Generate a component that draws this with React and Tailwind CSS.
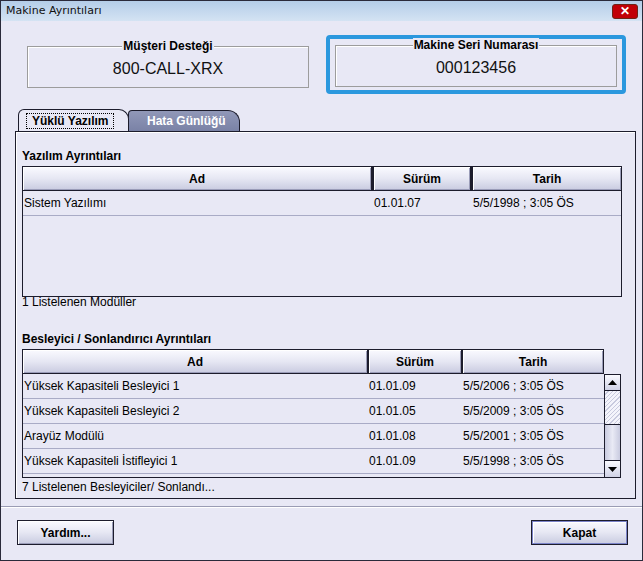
import React from "react";

const font = { fontFamily: '"Liberation Sans", Arial, sans-serif' };

const HeaderCell = ({ children, className = "" }) => (
  <div className={`flex items-center justify-center border border-[#1c1c2c] bg-gradient-to-b from-[#fafaff] via-[#e6e7f3] to-[#c9cbe0] shadow-[inset_1px_1px_0_#ffffff,inset_-1px_-1px_0_#9a9cb8] text-[12px] font-bold text-black ${className}`}>
    {children}
  </div>
);

const Row = ({ name, ver, date, cols }) => (
  <div className="flex h-[25px] items-center border-b border-[#a9abc6] text-[12px] text-black">
    <div className={`${cols[0]} pl-[1px]`}>{name}</div>
    <div className={`${cols[1]} pl-[2px]`}>{ver}</div>
    <div className={`${cols[2]} pl-[2px]`}>{date}</div>
  </div>
);

const InfoBox = ({ title, value }) => (
  <div className="relative h-[42px] border border-[#9c9c9c] shadow-[inset_1px_1px_0_#ffffff]">
    <div className="absolute -top-[8px] left-0 right-0 flex justify-center">
      <span className="bg-[#e8e8f5] px-[1px] text-[12px] font-bold leading-[14px] text-black">{title}</span>
    </div>
    <div className="pt-[13px] text-center text-[16px] leading-[18px] text-[#111]">{value}</div>
  </div>
);

const ScrollBar = () => (
  <div className="flex w-[17px] flex-col border border-[#1c1c2c] bg-[#d9dbec]">
    <div className="flex h-[16px] items-center justify-center border-b border-[#1c1c2c] bg-gradient-to-b from-[#fafaff] to-[#d0d2e6]">
      <svg width="9" height="5" viewBox="0 0 9 5"><path d="M4.5 0L9 5H0z" fill="#000" /></svg>
    </div>
    <div className="h-[34px] border-b border-[#1c1c2c] bg-[repeating-linear-gradient(135deg,#f4f4fb_0px,#f4f4fb_2px,#c8cade_2px,#c8cade_3px)]" />
    <div className="flex-1 bg-gradient-to-r from-[#c9cbe0] via-[#e9eaf5] to-[#c9cbe0]" />
    <div className="flex h-[17px] items-center justify-center border-t border-[#1c1c2c] bg-gradient-to-b from-[#fafaff] to-[#d0d2e6]">
      <svg width="9" height="5" viewBox="0 0 9 5"><path d="M0 0H9L4.5 5z" fill="#000" /></svg>
    </div>
  </div>
);

export default function App() {
  const cols1 = ["w-[349px]", "w-[99px]", "flex-1"];
  const cols2 = ["w-[344px]", "w-[94px]", "flex-1"];
  const feeders = [
    ["Yüksek Kapasiteli Besleyici 1", "01.01.09", "5/5/2006 ; 3:05 ÖS"],
    ["Yüksek Kapasiteli Besleyici 2", "01.01.05", "5/5/2009 ; 3:05 ÖS"],
    ["Arayüz Modülü", "01.01.08", "5/5/2001 ; 3:05 ÖS"],
    ["Yüksek Kapasiteli İstifleyici 1", "01.01.09", "5/5/1998 ; 3:05 ÖS"],
  ];

  return (
    <div style={font} className="flex h-[561px] w-[643px] flex-col border border-[#2a2a3a] bg-[#e8e8f5]">
      {/* Başlık çubuğu */}
      <div className="flex h-[20px] shrink-0 items-center justify-between bg-gradient-to-b from-[#b4cde8] to-[#d4e3f3] pl-[5px] pr-[4px]">
        <span className="text-[#111]" style={{ fontFamily: '"DejaVu Sans", sans-serif', fontSize: 11 }}>Makine Ayrıntıları</span>
        <div className="flex h-[15px] w-[26px] shrink-0 items-center justify-center rounded-[3px] border border-[#6e2416] bg-red-700 text-[12px] font-bold leading-none text-white">
          ✕
        </div>
      </div>

      {/* Üst kutular */}
      <div className="flex shrink-0 pl-[26px] pt-[24px] gap-[17px]">
        <div className="w-[282px] shrink-0 pt-[1px]">
          <InfoBox title="Müşteri Desteği" value="800-CALL-XRX" />
        </div>
        <div className="-mt-[10px] w-[300px] shrink-0 rounded-[4px] border-[4px] border-[#2b98de] px-[5px] pb-[3px] pt-[6px]">
          <InfoBox title="Makine Seri Numarası" value="000123456" />
        </div>
      </div>

      {/* Sekmeler */}
      <div className="ml-[17px] mt-[15px] flex h-[22px] shrink-0 items-end">
        <div className="relative flex h-[22px] w-[111px] items-center rounded-tl-[6px] rounded-tr-[10px] border border-b-0 border-[#1c1c2c] bg-[#e8e8f5] pl-[7px]">
          <span className="border border-dotted border-black px-[5px] text-[12px] font-bold leading-[14px]">Yüklü Yazılım</span>
        </div>
        <div className="-ml-[1px] flex h-[21px] w-[112px] items-center rounded-tl-[4px] rounded-tr-[12px] border border-b-0 border-[#1c1c2c] bg-gradient-to-b from-[#9198b8] to-[#7a82a6] pl-[18px] text-[12px] font-bold text-white">
          Hata Günlüğü
        </div>
      </div>

      {/* Sekme paneli */}
      <div className="ml-[14px] mr-[6px] flex h-[368px] shrink-0 flex-col border border-[#1c1c2c] px-[6px] shadow-[inset_1px_1px_0_#ffffff]">
        <div className="mt-[17px] text-[12px] font-bold leading-[14px]">Yazılım Ayrıntıları</div>
        <div className="mt-[3px] mr-[7px] h-[131px] border border-[#1c1c2c] bg-[#e8e8f5]">
          <div className="flex h-[24px]">
            <HeaderCell className={`${cols1[0]} border-l-0 border-t-0`}>Ad</HeaderCell>
            <HeaderCell className={`${cols1[1]} border-t-0 border-l-[2px]`}>Sürüm</HeaderCell>
            <HeaderCell className={`${cols1[2]} border-t-0 border-l-[2px] border-r-0`}>Tarih</HeaderCell>
          </div>
          <Row name="Sistem Yazılımı" ver="01.01.07" date="5/5/1998 ; 3:05 ÖS" cols={cols1} />
        </div>
        <div className="mt-[-1px] text-[12px] leading-[12px]">1 Listelenen Modüller</div>

        <div className="mt-[24px] text-[12px] font-bold leading-[14px]">Besleyici / Sonlandırıcı Ayrıntıları</div>
        <div className="mt-[3px] mr-[8px] flex flex-col">
          <div className="mr-[17px] flex h-[25px] border border-[#1c1c2c]">
            <HeaderCell className={`${cols2[0]} border-0`}>Ad</HeaderCell>
            <HeaderCell className={`${cols2[1]} border-y-0 border-r-0 border-l-[2px]`}>Sürüm</HeaderCell>
            <HeaderCell className={`${cols2[2]} border-y-0 border-r-0 border-l-[2px]`}>Tarih</HeaderCell>
          </div>
          <div className="flex h-[104px]">
            <div className="flex-1 border-y border-l border-[#1c1c2c] border-t-0">
              {feeders.map((f) => (
                <Row key={f[0]} name={f[0]} ver={f[1]} date={f[2]} cols={cols2} />
              ))}
            </div>
            <ScrollBar />
          </div>
        </div>
        <div className="mt-[2px] text-[12px] leading-[14px]">7 Listelenen Besleyiciler/ Sonlandı...</div>
      </div>

      {/* Alt çubuk */}
      <div className="mt-[7px] shrink-0 border-t border-[#9a9cb4] shadow-[0_1px_0_#ffffff]" />
      <div className="flex justify-between pl-[16px] pr-[14px] pt-[13px]">
        <button className="h-[25px] w-[97px] border border-[#1c1c2c] bg-gradient-to-b from-[#fafaff] via-[#e6e7f3] to-[#c9cbe0] text-[12px] font-bold shadow-[inset_1px_1px_0_#ffffff,inset_-1px_-1px_0_#9a9cb8]">
          Yardım...
        </button>
        <button className="h-[25px] w-[97px] border border-[#1c1c2c] bg-gradient-to-b from-[#fafaff] via-[#e6e7f3] to-[#c9cbe0] text-[12px] font-bold shadow-[inset_0_0_0_1px_#7b83c9,inset_2px_2px_0_#ffffff]">
          Kapat
        </button>
      </div>
    </div>
  );
}
